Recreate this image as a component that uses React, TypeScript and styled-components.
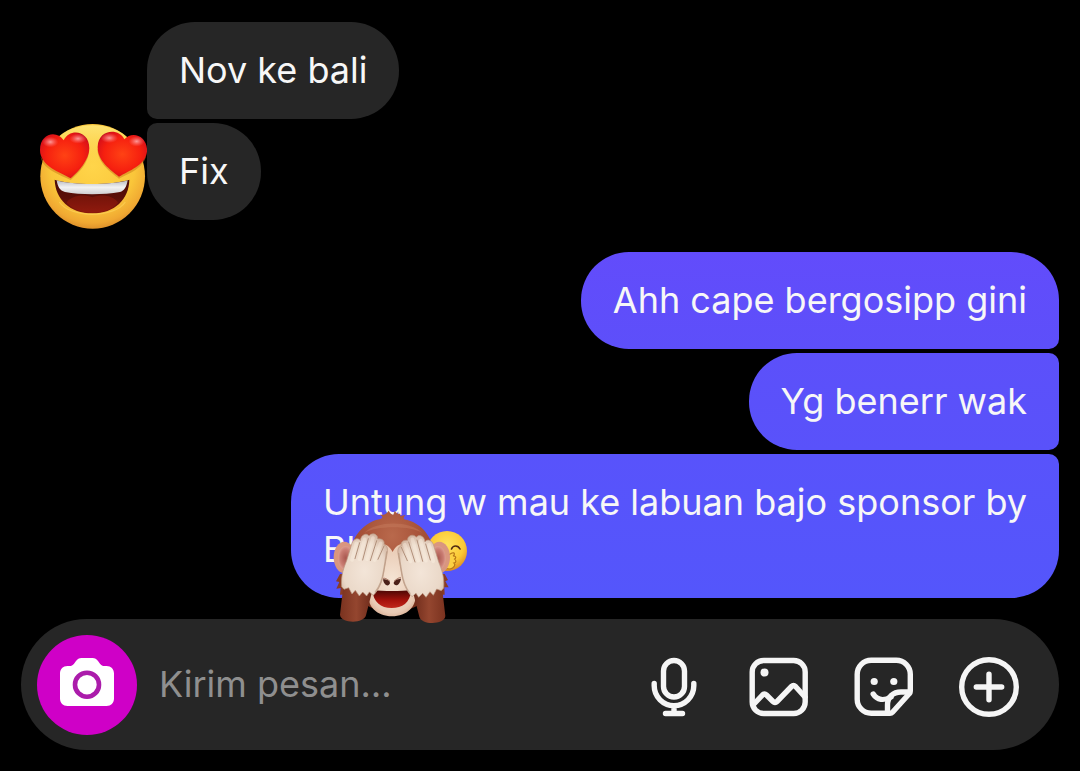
import React from "react";
import styled, { createGlobalStyle } from "styled-components";

const GlobalStyle = createGlobalStyle`
  *, *::before, *::after { box-sizing: border-box; }
  body { margin: 0; background: #000; }
`;

const Screen = styled.main`
  display: flex;
  flex-direction: column;
  min-height: 100vh;
  padding: 22px 21px 21px;
  background: #000;
  color: #f7f7f7;
  font-family: Inter, Roboto, "Liberation Sans", sans-serif;
  font-size: 36px;
  line-height: 47px;
`;

const Thread = styled.section`
  display: flex;
  flex: 1;
  flex-direction: column;
  gap: 32px;
  margin-bottom: 21px;
`;

const Group = styled.div`
  display: flex;
  flex-direction: column;
  gap: 4px;
`;

const Row = styled.div<{ $mine?: boolean }>`
  display: flex;
  justify-content: ${(p) => (p.$mine ? "flex-end" : "flex-start")};
`;

const AvatarSlot = styled.div`
  display: flex;
  flex: none;
  align-items: flex-start;
  justify-content: flex-end;
  width: 126px;
  height: 97px;
`;

const Bubble = styled.p<{ $fill: string; $corners: string }>`
  position: relative;
  max-width: 80%;
  margin: 0;
  padding: 25px 32px;
  border-radius: ${(p) => p.$corners};
  background: ${(p) => p.$fill};
`;

const Reaction = styled.span`
  position: absolute;
  z-index: 1;
  top: 56px;
  left: 41px;
  line-height: 0;
`;

const InlineEmoji = styled.svg`
  width: 40px;
  height: 40px;
  margin-left: 72px;
  vertical-align: -9px;
`;

const Composer = styled.form`
  display: flex;
  align-items: center;
  min-height: 131px;
  padding: 15px 40px 15px 16px;
  border-radius: 66px;
  background: #262626;
`;

const CameraButton = styled.button`
  flex: none;
  width: 100px;
  height: 100px;
  padding: 0;
  border: 0;
  border-radius: 50%;
  background: #cf00c7;
  cursor: pointer;
`;

const MessageInput = styled.input`
  flex: 1;
  min-width: 0;
  margin: 0 22px;
  padding: 0;
  border: 0;
  outline: 0;
  background: transparent;
  color: #f7f7f7;
  font: inherit;

  &::placeholder {
    color: #8f8f8f;
    opacity: 1;
  }
`;

const Tools = styled.div`
  display: flex;
  flex: none;
  gap: 45px;
  padding-top: 4px;
`;

const ToolButton = styled.button`
  width: 60px;
  height: 60px;
  padding: 0;
  border: 0;
  background: transparent;
  color: #f5f5f5;
  cursor: pointer;
`;

const Icon = styled.svg`
  display: block;
  width: 60px;
  height: 60px;
  fill: none;
  stroke: currentColor;
  stroke-width: 5.4;
  stroke-linecap: round;
  stroke-linejoin: round;
`;

const HeartEyes = () => (
  <svg width="109" height="107" viewBox="54 69 327 321" role="img" aria-label="Heart eyes">
    <defs>
      <radialGradient id="heFace" cx="0.5" cy="0.4" r="0.62">
        <stop offset="0" stopColor="#ffd54a" />
        <stop offset="0.65" stopColor="#fac63a" />
        <stop offset="0.88" stopColor="#f0a832" />
        <stop offset="1" stopColor="#d98a28" />
      </radialGradient>
      <linearGradient id="heShine" x1="0" y1="0" x2="0" y2="1">
        <stop offset="0" stopColor="#fff08a" stopOpacity="0.7" />
        <stop offset="1" stopColor="#ffe060" stopOpacity="0" />
      </linearGradient>
      <radialGradient id="heHeart" cx="0.5" cy="0.5" r="0.62">
        <stop offset="0" stopColor="#ff4214" />
        <stop offset="0.6" stopColor="#f6200f" />
        <stop offset="0.86" stopColor="#dc1218" />
        <stop offset="1" stopColor="#a80d22" />
      </radialGradient>
      <radialGradient id="heGlint">
        <stop offset="0" stopColor="#ffb0b0" stopOpacity="0.85" />
        <stop offset="1" stopColor="#ff7a7a" stopOpacity="0" />
      </radialGradient>
      <linearGradient id="heMouth" x1="0" y1="0" x2="0" y2="1">
        <stop offset="0" stopColor="#4a0b06" />
        <stop offset="0.55" stopColor="#5c0f08" />
        <stop offset="1" stopColor="#84180d" />
      </linearGradient>
      <linearGradient id="heTeeth" x1="0" y1="0" x2="0" y2="1">
        <stop offset="0" stopColor="#b9bbc0" />
        <stop offset="0.5" stopColor="#f2f2f2" />
        <stop offset="1" stopColor="#cfcfd2" />
      </linearGradient>
    </defs>
    <circle cx="218" cy="229" r="157" fill="url(#heFace)" />
    <ellipse cx="218" cy="132" rx="108" ry="56" fill="url(#heShine)" />
    <path d="M152 240C120 224 66 206 62 170C76 200 170 216 208 150C206 190 175 220 152 240ZM297 236C270 214 234 190 232 146C250 200 360 200 379 166C370 206 325 222 297 236Z" fill="#c97a17" opacity="0.5" />
    <path d="M152 235C120 217 60 198 60 150C60 98 112 90 131 121C148 84 208 90 208 145C208 180 175 215 152 235Z" fill="url(#heHeart)" />
    <path d="M297 230C270 208 232 182 233 140C235 86 298 84 313 118C337 90 384 108 381 155C376 197 325 212 297 230Z" fill="url(#heHeart)" />
    <ellipse cx="91" cy="126" rx="24" ry="16" fill="url(#heGlint)" />
    <ellipse cx="174" cy="116" rx="26" ry="15" fill="url(#heGlint)" />
    <ellipse cx="268" cy="114" rx="26" ry="15" fill="url(#heGlint)" />
    <ellipse cx="350" cy="124" rx="24" ry="16" fill="url(#heGlint)" />
    <path d="M104 239C150 256 280 256 328 239C327 298 284 340 217 340C150 340 106 298 104 239Z" fill="url(#heMouth)" />
    <path d="M140 308C150 288 190 280 217 292C244 280 284 288 294 308C276 328 250 338 217 338C184 338 158 328 140 308Z" fill="#a51f10" opacity="0.4" />
    <path d="M110 241C160 256 272 256 323 241C320 260 313 273 300 276C250 285 182 285 135 276C119 272 113 260 110 241Z" fill="url(#heTeeth)" />
    <path d="M118 306C150 355 284 355 316 306" fill="none" stroke="#ffdb63" strokeWidth="4" opacity="0.5" />
  </svg>
);

const MonkeyArm = ({ mirrored = false }: { mirrored?: boolean }) => (
  <g transform={mirrored ? "translate(616 4) scale(-1 1)" : undefined}>
    <path d="M160 408L150 494C152 521 222 522 228 496L248 418Z" fill="url(#mkArm)" />
    <path
      d="M155 410C152 376 162 352 170 332L184 286C188 264 207 262 211 272C213 252 231 248 237 258C245 246 265 252 263 267C279 264 285 276 282 284C293 286 294 298 291 312L282 362C278 394 266 420 250 436L238 426L230 438L218 426L208 438L196 421L186 432L176 413L162 418Z"
      fill="url(#mkHand)"
      stroke="#b99780"
      strokeWidth="2"
    />
    <path d="M209 278L195 326M235 266L218 330M260 272L241 332M282 288L264 328" fill="none" stroke="#b08f79" strokeWidth="3" strokeLinecap="round" />
    <path d="M199 280L186 330M224 268L208 328M249 264L231 328M272 280L254 330" fill="none" stroke="#fff5e8" strokeWidth="11" strokeLinecap="round" opacity="0.35" />
    <path d="M290 306L281 362C277 390 267 412 256 426" fill="none" stroke="#b8967f" strokeWidth="4" strokeLinecap="round" opacity="0.7" />
  </g>
);

const CoveredMonkey = () => (
  <svg width="118" height="115" viewBox="126 180 354 345" role="img" aria-label="See no evil monkey">
    <defs>
      <radialGradient id="mkHead" cx="0.5" cy="0.25" r="0.7">
        <stop offset="0" stopColor="#b9694c" />
        <stop offset="0.6" stopColor="#a34d34" />
        <stop offset="1" stopColor="#75301c" />
      </radialGradient>
      <linearGradient id="mkArm" x1="0" y1="0" x2="1" y2="0">
        <stop offset="0" stopColor="#7a321f" />
        <stop offset="0.5" stopColor="#94462f" />
        <stop offset="1" stopColor="#6d2a1a" />
      </linearGradient>
      <radialGradient id="mkHand" cx="0.5" cy="0.6" r="0.65">
        <stop offset="0" stopColor="#f3e5d8" />
        <stop offset="0.7" stopColor="#ead8c8" />
        <stop offset="1" stopColor="#cfb09b" />
      </radialGradient>
      <radialGradient id="mkFace" cx="0.5" cy="0.5" r="0.6">
        <stop offset="0" stopColor="#f5e4d4" />
        <stop offset="0.75" stopColor="#e9cbb5" />
        <stop offset="1" stopColor="#cf9a7c" />
      </radialGradient>
      <radialGradient id="mkEar">
        <stop offset="0" stopColor="#a9584f" />
        <stop offset="0.7" stopColor="#c97c72" />
        <stop offset="1" stopColor="#dc9d90" />
      </radialGradient>
      <linearGradient id="mkMouth" x1="0" y1="0" x2="0" y2="1">
        <stop offset="0" stopColor="#4a0805" />
        <stop offset="0.6" stopColor="#a8130c" />
        <stop offset="1" stopColor="#c0281c" />
      </linearGradient>
    </defs>
    <path d="M150 372L138 394L148 396L139 416L152 414L150 434L190 432L190 372ZM464 372L474 390L466 394L476 412L463 412L464 434L424 432L424 372Z" fill="#8a3c25" />
    <ellipse cx="163" cy="322" rx="32" ry="47" fill="#d9967f" />
    <ellipse cx="167" cy="324" rx="23" ry="36" fill="url(#mkEar)" />
    <ellipse cx="448" cy="322" rx="32" ry="47" fill="#d9967f" />
    <ellipse cx="444" cy="324" rx="23" ry="36" fill="url(#mkEar)" />
    <path
      d="M178 330C178 258 226 214 273 206C281 201 277 198 269 194C281 196 290 192 296 182C300 190 306 194 310 194L314 183C320 190 325 193 331 191L331 198L346 195C342 200 340 204 342 208C396 218 434 264 434 332C438 408 420 482 306 486C198 482 174 408 178 330Z"
      fill="url(#mkHead)"
    />
    <path d="M222 250C256 212 360 210 398 250C364 226 256 226 222 250Z" fill="#cf8767" opacity="0.35" />
    <path d="M308 306C328 262 384 276 392 340C396 372 380 400 376 424C384 470 350 499 306 499C262 499 228 470 236 424C230 400 218 372 222 340C230 276 286 262 308 306Z" fill="url(#mkFace)" />
    <path d="M279 388C282 409 297 410 300 400C300 391 291 388 279 388ZM333 386C329 408 315 410 311 400C312 391 321 387 333 386Z" fill="#4c2119" />
    <path d="M279 386C284 382 293 389 300 394M333 384C328 381 319 388 312 394" stroke="#9d6957" strokeWidth="3" fill="none" />
    <path d="M247 420C280 424 334 424 364 420C360 459 337 474 305 474C272 474 250 457 247 420Z" fill="url(#mkMouth)" />
    <MonkeyArm />
    <MonkeyArm mirrored />
  </svg>
);

const GiggleFace = () => (
  <InlineEmoji viewBox="0 0 40 40" role="img" aria-label="Face with hand over mouth">
    <defs>
      <radialGradient id="ggFace" cx="0.5" cy="0.35" r="0.65">
        <stop offset="0" stopColor="#ffe25c" />
        <stop offset="0.65" stopColor="#fbc935" />
        <stop offset="1" stopColor="#dc8b22" />
      </radialGradient>
    </defs>
    <circle cx="20" cy="20" r="20" fill="url(#ggFace)" />
    <path d="M7 18C9 14 13 14 15 18M24.500 18C26 14 31 14 33 18" fill="none" stroke="#512b12" strokeWidth="1.600" strokeLinecap="round" />
    <path d="M16 27L25 22C28 21 28 24 26 25C30 25 29 28 27 28C30 29 29 32 27 32C29 34 27 37 23 38L14 37Z" fill="#fbd044" stroke="#b87818" strokeWidth="1.200" />
  </InlineEmoji>
);

const CameraIcon = () => (
  <svg width="100" height="100" viewBox="0 0 100 100" aria-hidden="true">
    <path
      d="M44.500 23H55.500C58 23 59.500 24 61 26L63 28.700C64.300 30.400 65.500 31 67.500 31H69.500C74 31 77 34 77 38.500V63.500C77 68 74 71 69.500 71H30.500C26 71 23 68 23 63.500V38.500C23 34 26 31 30.500 31H32.500C34.500 31 35.700 30.400 37 28.700L39 26C40.500 24 42 23 44.500 23Z"
      fill="#fff"
    />
    <circle cx="50" cy="49.700" r="12" fill="#fff" stroke="#ab1cab" strokeWidth="4.600" />
  </svg>
);

const MicIcon = () => (
  <Icon viewBox="0 0 60 60" aria-hidden="true">
    <rect x="19.500" y="3.500" width="21" height="36.500" rx="10.500" />
    <path d="M10.200 26.500V28.800A19.800 19.800 0 0 0 49.800 28.800V26.500M30 49V56M21.500 56.500H38.500" />
  </Icon>
);

const PhotoIcon = () => (
  <Icon viewBox="0 0 60 60" aria-hidden="true">
    <rect x="3.200" y="3.500" width="53" height="53" rx="11.500" />
    <circle cx="15.500" cy="15.500" r="4" fill="currentColor" stroke="none" />
    <path d="M4.500 47.500L13.500 38Q15.500 36 17.500 38L24 44.500Q26 46.500 28 44.500L42.500 29.500Q44.500 27.500 46.500 29.500L56 40" />
  </Icon>
);

const StickerIcon = () => (
  <Icon viewBox="0 0 60 60" aria-hidden="true">
    <path d="M36 56.300H17.200A14 14 0 0 1 3.200 42.300V17.200A14 14 0 0 1 17.200 3.200H42.300A14 14 0 0 1 56.300 17.200V34Q56.300 35.700 55.200 36.800L38.500 55.200Q37.500 56.300 36 56.300Z" />
    <path d="M33.500 55V48C33.500 40 39 35 47 35H55.500" />
    <path d="M19.200 37C23 43 30 44 37 40" />
    <circle cx="20.200" cy="24.500" r="3.600" fill="currentColor" stroke="none" />
    <circle cx="39.800" cy="24.500" r="3.600" fill="currentColor" stroke="none" />
  </Icon>
);

const PlusIcon = () => (
  <Icon viewBox="0 0 60 60" aria-hidden="true">
    <circle cx="30" cy="30" r="27.300" />
    <path d="M30 17.300V42.700M17.300 30H42.700" />
  </Icon>
);

export default function App() {
  return (
    <Screen lang="id">
      <GlobalStyle />
      <Thread>
        <Group>
          <Row>
            <AvatarSlot />
            <Bubble $fill="#262626" $corners="48px 48px 48px 10px">Nov ke bali</Bubble>
          </Row>
          <Row>
            <AvatarSlot>
              <HeartEyes />
            </AvatarSlot>
            <Bubble $fill="#262626" $corners="10px 48px 48px 48px">Fix</Bubble>
          </Row>
        </Group>
        <Group>
          <Row $mine>
            <Bubble $fill="linear-gradient(#624cfb, #5d4ffa)" $corners="48px 48px 10px 48px">
              Ahh cape bergosipp gini
            </Bubble>
          </Row>
          <Row $mine>
            <Bubble $fill="linear-gradient(#5c50fa, #5952fa)" $corners="48px 10px 10px 48px">
              Yg benerr wak
            </Bubble>
          </Row>
          <Row $mine>
            <Bubble $fill="linear-gradient(#5853fb, #5456fb)" $corners="48px 10px 48px 48px">
              Untung w mau ke labuan bajo sponsor by
              <br />
              Bl
              <GiggleFace />
              <Reaction>
                <CoveredMonkey />
              </Reaction>
            </Bubble>
          </Row>
        </Group>
      </Thread>
      <Composer onSubmit={(e) => e.preventDefault()}>
        <CameraButton type="button" aria-label="Kamera">
          <CameraIcon />
        </CameraButton>
        <MessageInput type="text" aria-label="Kirim pesan" placeholder="Kirim pesan…" />
        <Tools>
          <ToolButton type="button" aria-label="Pesan suara">
            <MicIcon />
          </ToolButton>
          <ToolButton type="button" aria-label="Galeri">
            <PhotoIcon />
          </ToolButton>
          <ToolButton type="button" aria-label="Stiker">
            <StickerIcon />
          </ToolButton>
          <ToolButton type="button" aria-label="Lainnya">
            <PlusIcon />
          </ToolButton>
        </Tools>
      </Composer>
    </Screen>
  );
}
